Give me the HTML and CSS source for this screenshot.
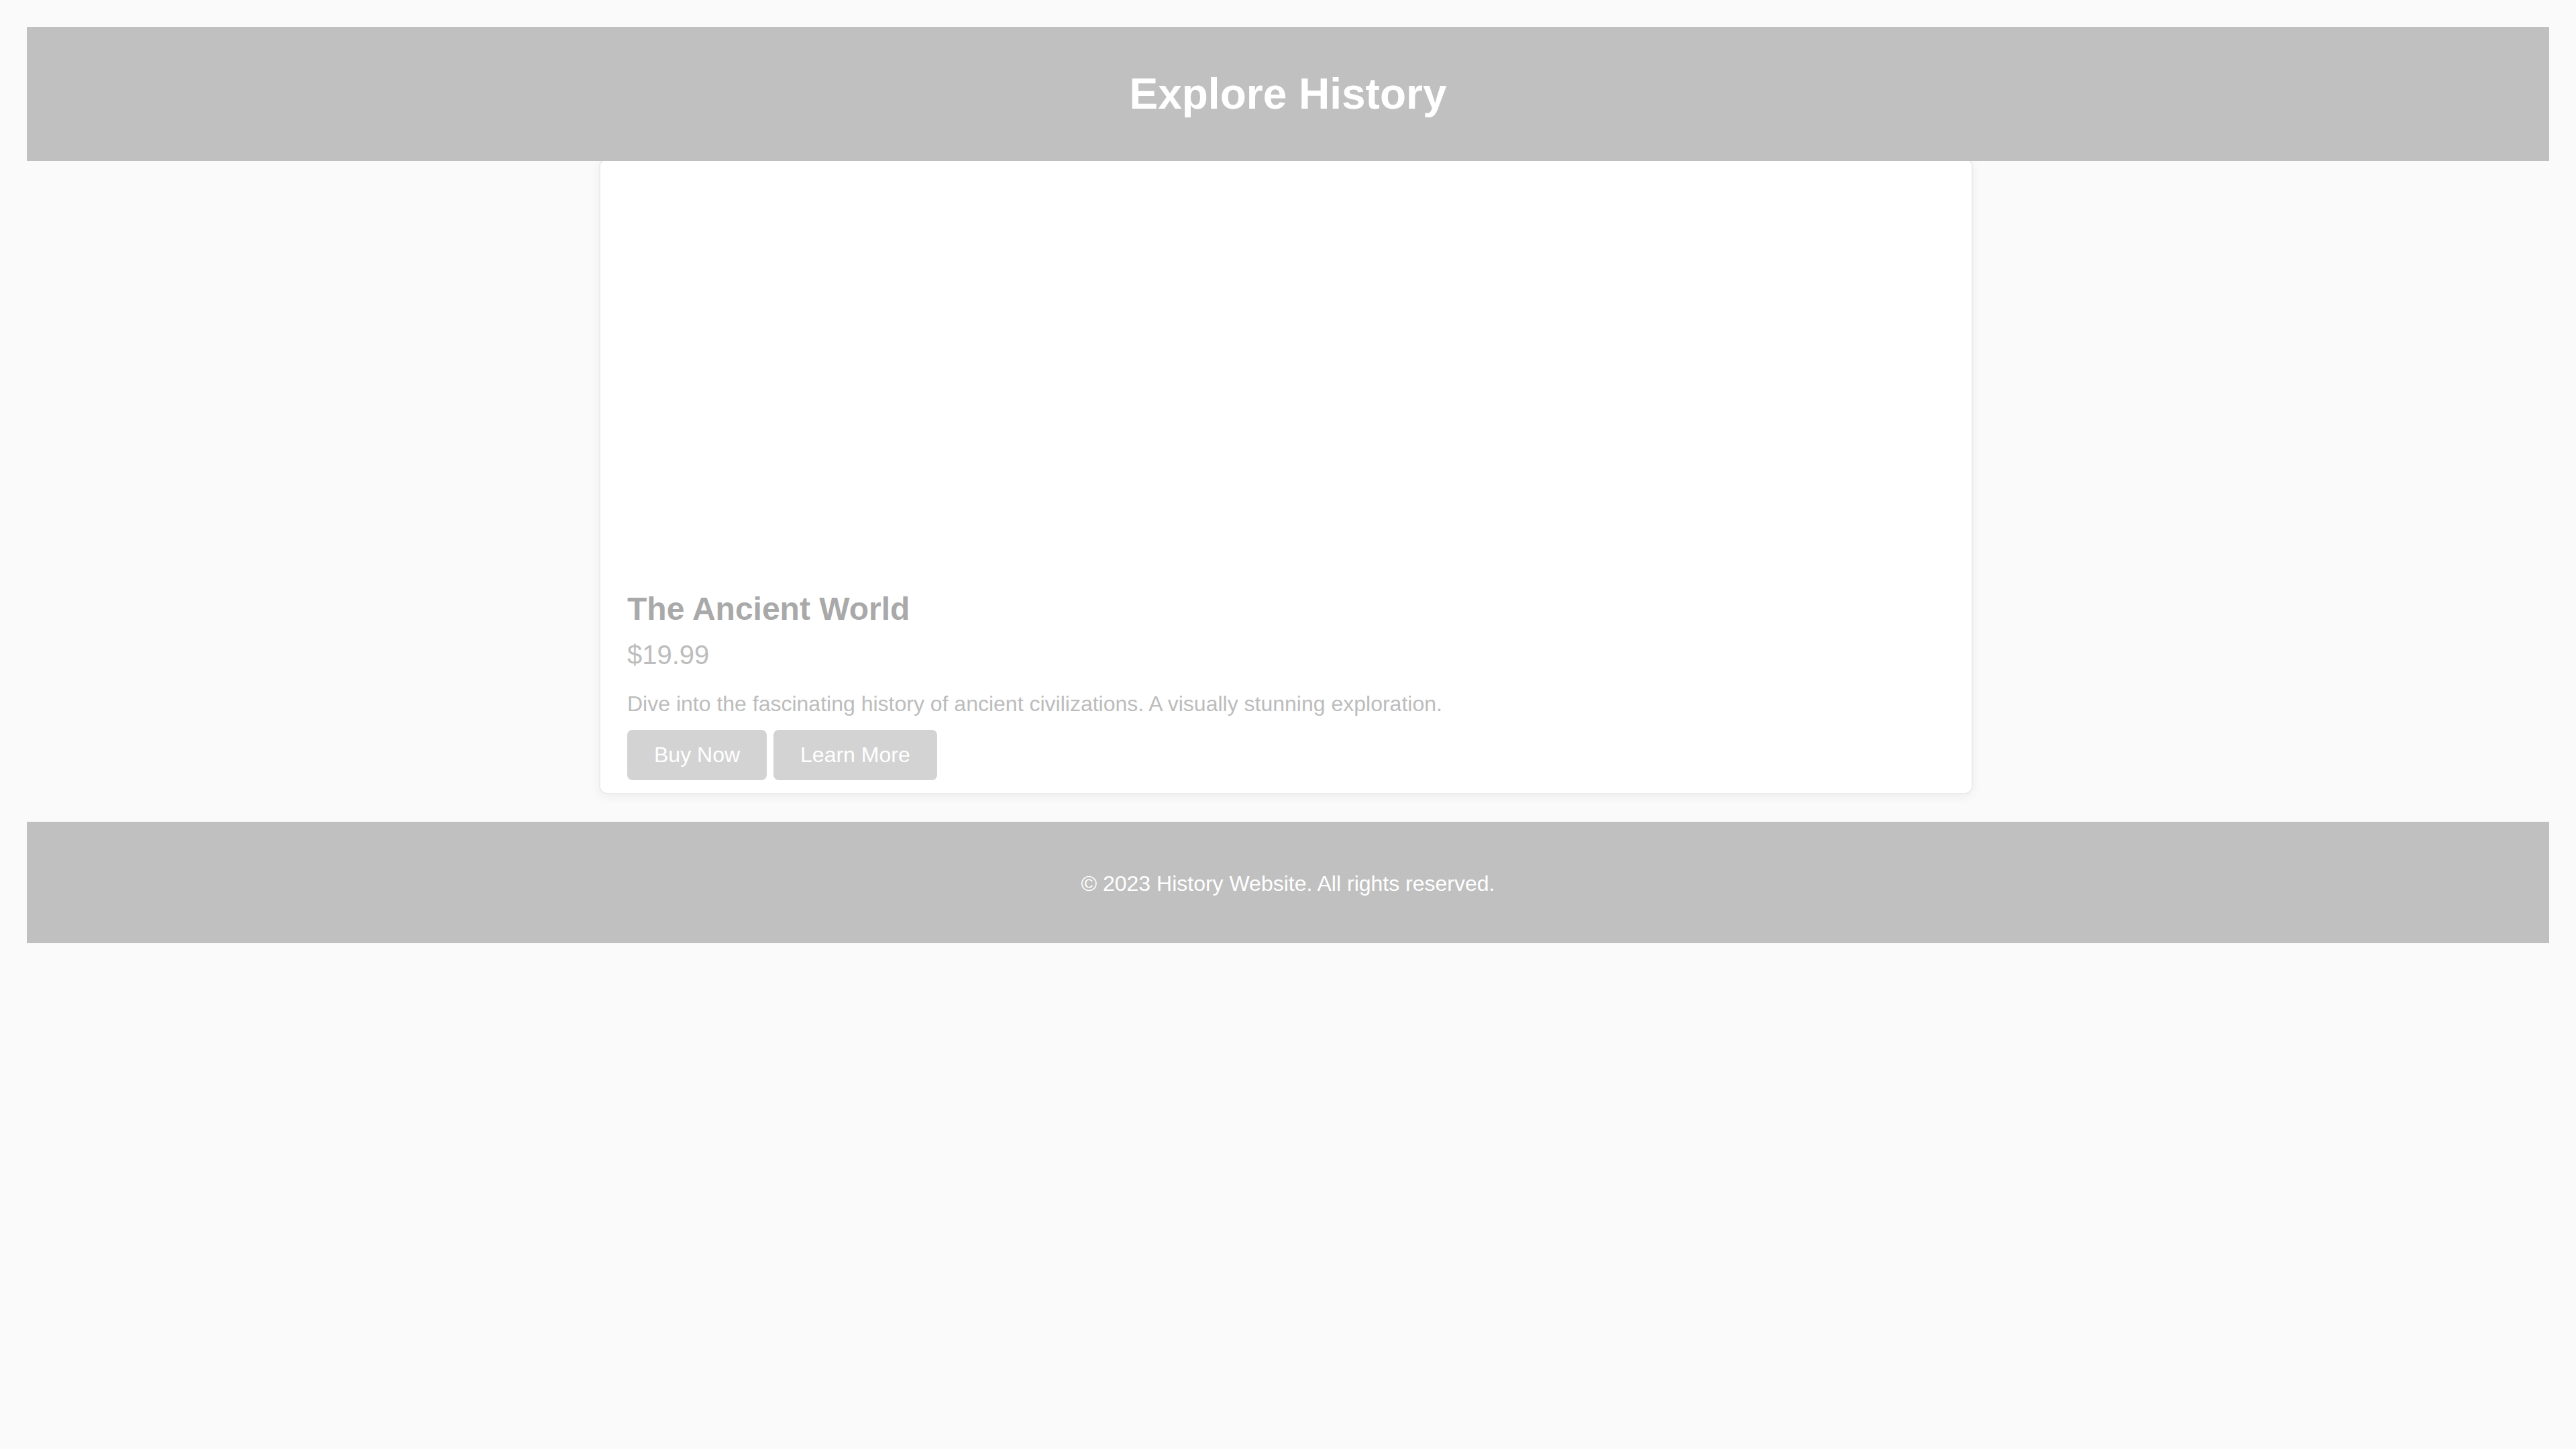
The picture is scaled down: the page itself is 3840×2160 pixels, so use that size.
FILE: index.html
```html
<!DOCTYPE html>
<html lang="en">
<head>
<meta charset="utf-8">
<title>Explore History</title>
<link rel="stylesheet" href="styles.css">
</head>
<body>
  <header class="site-header">
    <h1 class="site-title">Explore History</h1>
  </header>
  <main class="main">
    <article class="card">
      <div class="card-image"></div>
      <div class="card-body">
        <h3 class="card-title">The Ancient World</h3>
        <p class="card-price">$19.99</p>
        <p class="card-desc">Dive into the fascinating history of ancient civilizations. A visually stunning exploration.</p>
        <div class="card-actions">
          <button class="btn">Buy Now</button>
          <button class="btn">Learn More</button>
        </div>
      </div>
    </article>
  </main>
  <footer class="site-footer">
    <p class="footer-text">&copy; 2023 History Website. All rights reserved.</p>
  </footer>
</body>
</html>
```

FILE: styles.css
```css
html, body {
  background: #fafafa;
}
body {
  margin: 0;
  padding: 40px;
  font-family: "Liberation Sans", Arial, sans-serif;
}
.site-header {
  position: relative;
  z-index: 1;
  background: #c0c0c0;
  padding: 63px 0;
  text-align: center;
}
.site-title {
  margin: 0;
  font-size: 64px;
  line-height: 74px;
  font-weight: bold;
  color: #ffffff;
}
.main {
  padding: 0 6px 41px 0;
}
.card {
  box-sizing: border-box;
  width: 2048px;
  margin: -4px auto 0;
  background: #ffffff;
  border: 2px solid #ececec;
  border-radius: 12px;
  box-shadow: 0 4px 16px rgba(0, 0, 0, 0.05);
}
.card-image {
  height: 602px;
}
.card-body {
  padding: 40px 40px 19px;
}
.card-title {
  margin: 0 0 19px;
  font-size: 48px;
  line-height: normal;
  font-weight: bold;
  color: #a9a9a9;
}
.card-price {
  margin: 0 0 32px;
  font-size: 40px;
  line-height: normal;
  color: #bdbdbd;
}
.card-desc {
  margin: 0 0 20px;
  font-size: 32px;
  line-height: normal;
  color: #bcbcbc;
}
.card-actions {
  display: flex;
  gap: 10px;
}
.btn {
  font-family: "Liberation Sans", Arial, sans-serif;
  font-size: 32px;
  line-height: normal;
  padding: 19px 40px;
  border: none;
  border-radius: 8px;
  background: #d3d3d3;
  color: #ffffff;
}
.site-footer {
  background: #c0c0c0;
  padding: 40px 0;
  text-align: center;
}
.footer-text {
  margin: 34px 0 30px;
  font-size: 32px;
  line-height: normal;
  color: #ffffff;
}
```
